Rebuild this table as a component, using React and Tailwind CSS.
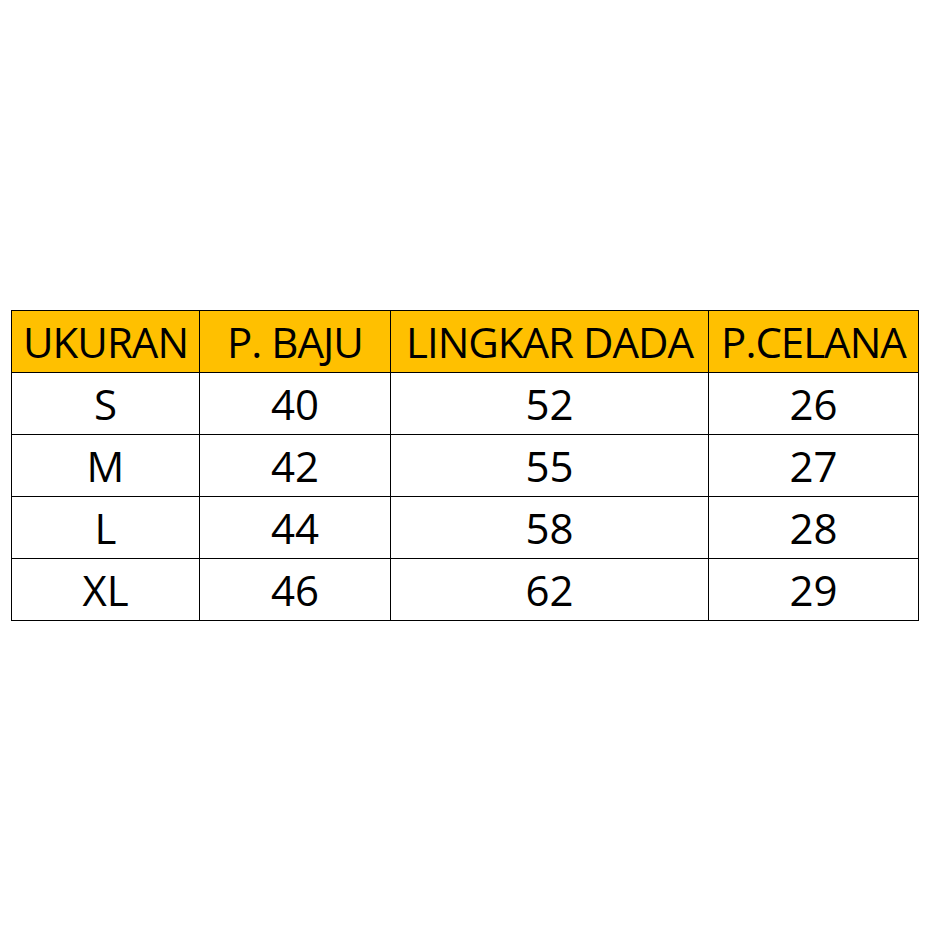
const rows = [
  ["S", "40", "52", "26"],
  ["M", "42", "55", "27"],
  ["L", "44", "58", "28"],
  ["XL", "46", "62", "29"],
]

const heads = ["UKURAN", "P. BAJU", "LINGKAR DADA", "P.CELANA"]
const widths = ["w-[188px]", "w-[191px]", "w-[318px]", "w-[210px]"]

export default function App() {
  return (
    <div className="w-[931px] h-[931px] bg-white flex items-center pl-[11px]" style={{ fontFamily: '"Open Sans", sans-serif' }}>
      <table className="border-collapse text-black table-fixed">
        <thead>
          <tr className="bg-[#ffc000]">
            {heads.map((h, i) => (
              <th key={h} className={`${widths[i]} h-[62px] border border-black p-0 font-normal text-[42px] leading-none text-center whitespace-nowrap tracking-[-1px]`}>
                {h}
              </th>
            ))}
          </tr>
        </thead>
        <tbody>
          {rows.map((r) => (
            <tr key={r[0]}>
              {r.map((c, i) => (
                <td key={i} className="h-[62px] border border-black p-0 text-[42px] leading-none text-center">
                  {c}
                </td>
              ))}
            </tr>
          ))}
        </tbody>
      </table>
    </div>
  )
}
